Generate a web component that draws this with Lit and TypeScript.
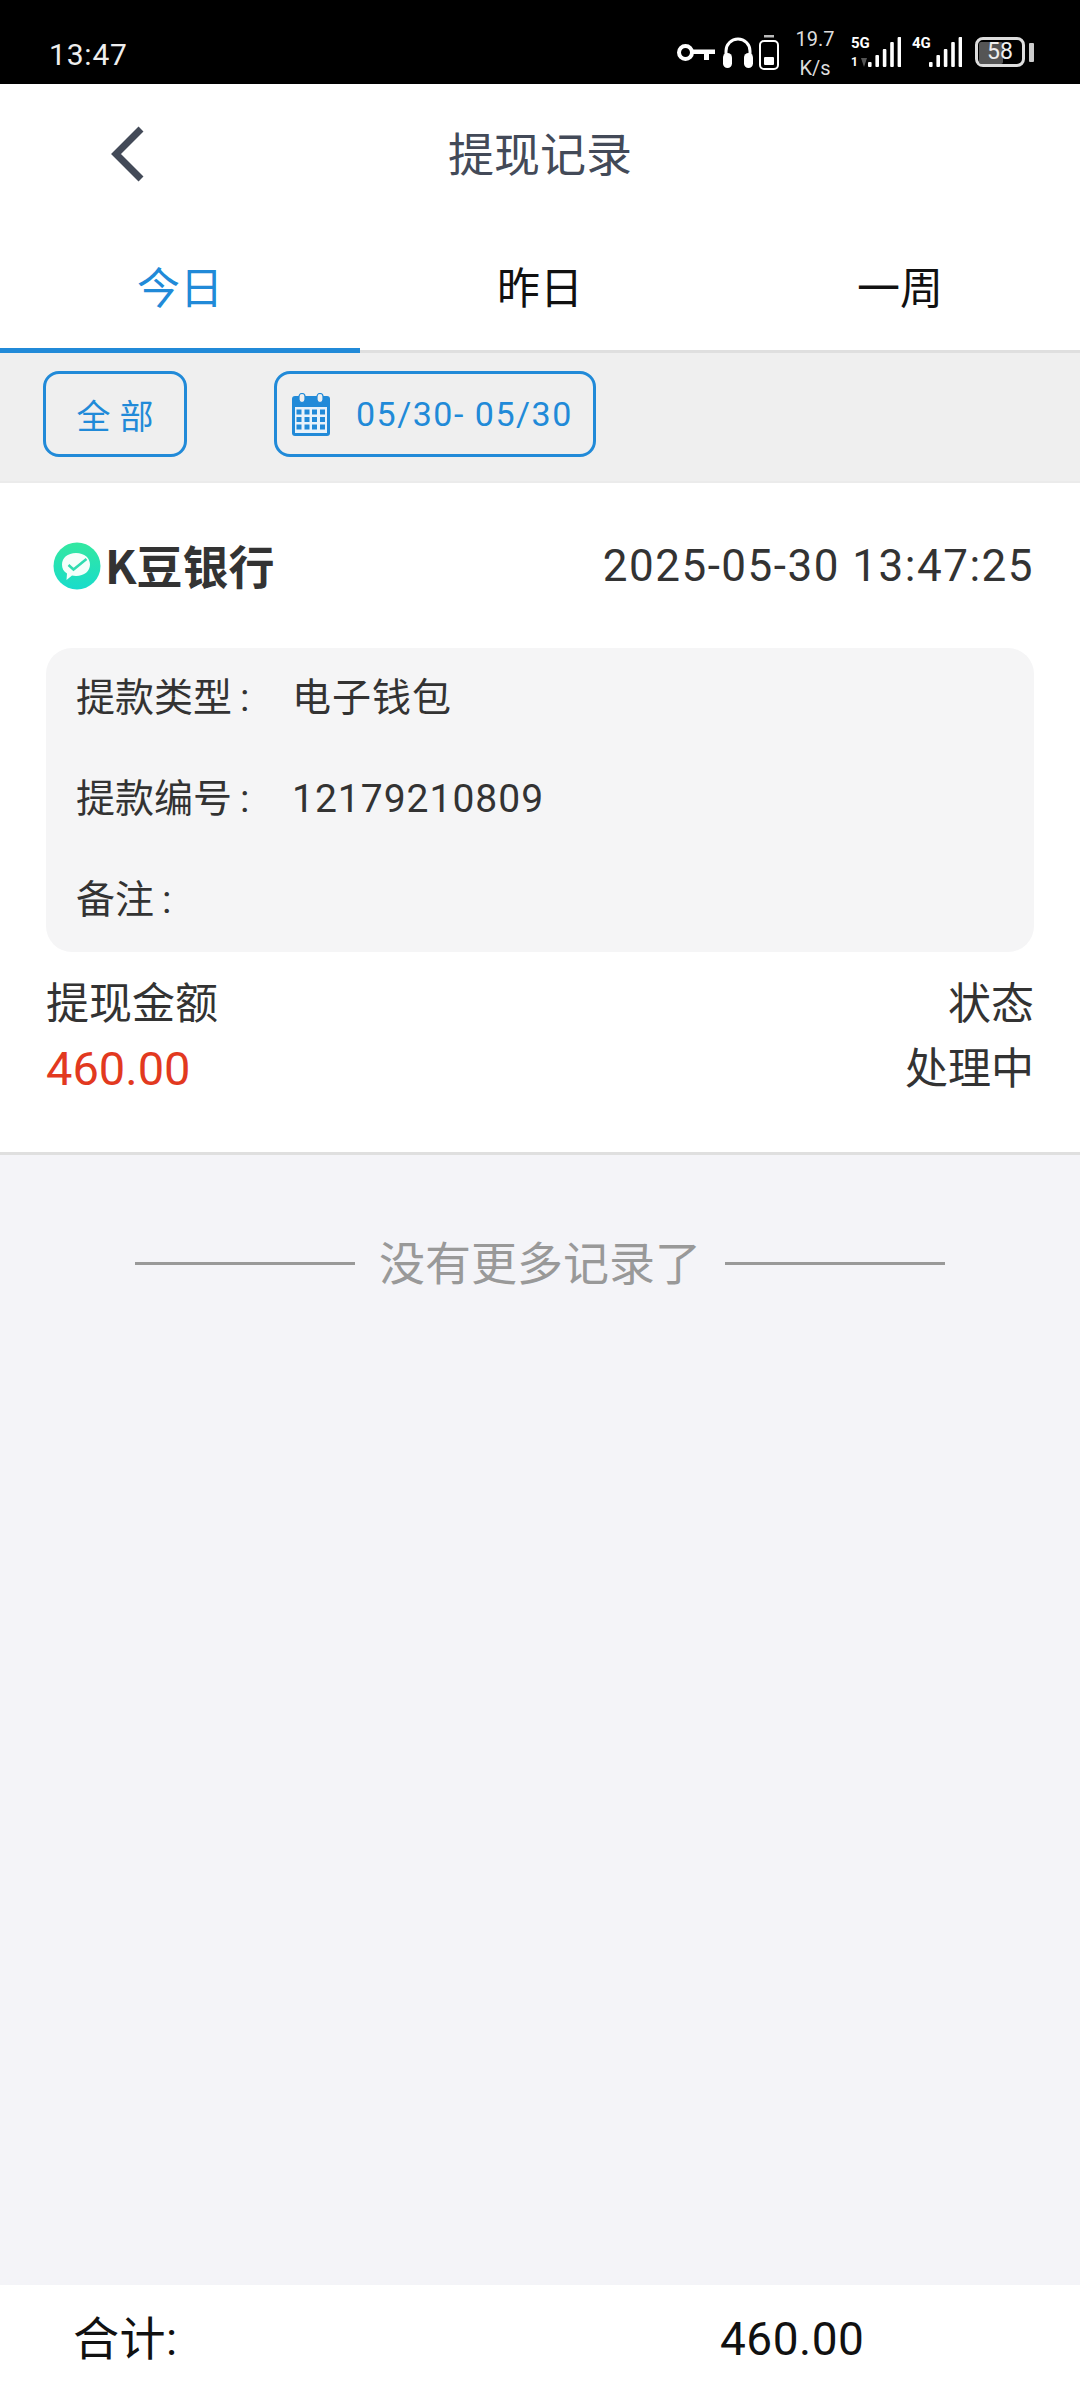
import { css, html, LitElement, svg } from "lit";
import { customElement, state } from "lit/decorators.js";

const TABS = ["今日", "昨日", "一周"];

const DETAILS = [
  { label: "提款类型", value: "电子钱包" },
  { label: "提款编号", value: "12179210809" },
  { label: "备注", value: "" },
];

const backIcon = html`<svg class="back" width="40" height="68" viewBox="0 0 40 68">
  <path d="M36 9 L11 34 L36 59" fill="none" stroke="#434a58" stroke-width="7" />
</svg>`;

const calendarIcon = html`<svg width="38" height="43" viewBox="0 0 38 43">
  <path d="M3 3h32a3 3 0 0 1 3 3v34a3 3 0 0 1-3 3H3a3 3 0 0 1-3-3V6a3 3 0 0 1 3-3z" fill="#218ad8" />
  <rect x="3" y="14" width="32" height="26" fill="#e8f2fa" />
  <rect x="7" y="0.5" width="6" height="9" rx="3" fill="#efefef" stroke="#218ad8" stroke-width="1.2" />
  <rect x="25" y="0.5" width="6" height="9" rx="3" fill="#efefef" stroke="#218ad8" stroke-width="1.2" />
  ${[16.5, 24, 31.5].map((y) =>
    [4.5, 12.5, 20, 28].map((x) => svg`<rect x=${x} y=${y} width="5" height="5" fill="#218ad8" />`)
  )}
</svg>`;

const bankIcon = html`<svg width="48" height="48" viewBox="0 0 48 48">
  <defs>
    <linearGradient id="bank" x1="0" y1="0" x2="0" y2="1">
      <stop offset="0" stop-color="#33e8a0" />
      <stop offset="1" stop-color="#19dccb" />
    </linearGradient>
  </defs>
  <circle cx="24" cy="24" r="23.5" fill="url(#bank)" />
  <path
    d="M23 11c8.5 0 14 5 14 11.5S31.500 34 23 34c-1.500 0-2.800-.2-4-.5L13.500 38l.5-6.500C10.500 29.500 9 26.500 9 22.500 9 16 14.500 11 23 11z"
    fill="#f4fffb"
  />
  <path d="M15.500 23l5 4.500L33.500 17" fill="none" stroke="#2fdcb0" stroke-width="2.500" />
</svg>`;

const keyIcon = html`<svg width="38" height="17" viewBox="0 0 38 17">
  <circle cx="8.500" cy="8.500" r="6.500" fill="none" stroke="#fff" stroke-width="4" />
  <path d="M14 5.500h24v4.500h-6v6h-5v-6H14z" fill="#fff" />
</svg>`;

const headsetIcon = html`<svg width="30" height="32" viewBox="0 0 30 32">
  <path d="M3 20V15a12 12 0 0 1 24 0v5" fill="none" stroke="#fff" stroke-width="3" />
  <rect x="0" y="17" width="9" height="15" rx="4.500" fill="#fff" />
  <rect x="21" y="17" width="9" height="15" rx="4.500" fill="#fff" />
</svg>`;

const phoneBatteryIcon = html`<svg width="20" height="35" viewBox="0 0 20 35">
  <rect x="5" y="0" width="10" height="2.500" fill="#bbb" />
  <rect x="1" y="6" width="18" height="28" rx="4" fill="none" stroke="#fff" stroke-width="2" />
  <rect x="5" y="22" width="10" height="8" rx="1" fill="#fff" />
</svg>`;

const signalBars = html`<svg width="33" height="30" viewBox="0 0 33 30">
  ${[5, 12, 18, 25, 30].map(
    (h, i) => svg`<rect x=${i * 7.4} y=${30 - h} width="3.600" height=${h} rx="1" fill="#fff" />`
  )}
</svg>`;

@customElement("app-root")
export class AppRoot extends LitElement {
  static styles = css`
    :host {
      display: block;
      width: 1080px;
      height: 2400px;
      font-family: Roboto, "Noto Sans CJK SC", sans-serif;
      background: #f4f4f8;
      color: #333;
    }
    .page {
      display: flex;
      flex-direction: column;
      height: 2400px;
    }
    .status {
      height: 84px;
      background: #000;
      color: #fff;
      display: flex;
      align-items: center;
      justify-content: space-between;
      padding: 20px 46px 0 49px;
      flex: none;
      box-sizing: border-box;
    }
    .time {
      font-size: 30px;
      letter-spacing: 0.8px;
      color: #eee;
      margin-top: 4px;
    }
    .status-right {
      display: flex;
      align-items: center;
    }
    .status-right svg {
      display: block;
    }
    .headset {
      margin-left: 8px;
    }
    .phone {
      margin-left: 6px;
    }
    .speed {
      width: 50px;
      margin: 4px 1px 0 11px;
      font-size: 20px;
      line-height: 29px;
      text-align: center;
      color: #ddd;
    }
    .net {
      display: flex;
      align-items: flex-end;
      gap: 1px;
      height: 30px;
      margin-left: 10px;
    }
    .net + .net {
      margin-left: 11px;
    }
    .net-side {
      width: 16px;
      height: 30px;
      display: flex;
      flex-direction: column;
      justify-content: space-between;
      font-size: 15px;
      font-weight: 700;
      line-height: 13px;
    }
    .net-one {
      display: flex;
      align-items: center;
      gap: 3px;
      font-size: 12px;
      line-height: 10px;
    }
    .net-down {
      width: 0;
      height: 0;
      border-top: 9px solid #555;
      border-left: 3px solid transparent;
      border-right: 3px solid transparent;
    }
    .battery {
      position: relative;
      box-sizing: border-box;
      width: 50px;
      height: 30px;
      margin-left: 13px;
      border: 3px solid #ddd;
      border-radius: 8px;
      font-size: 23px;
      line-height: 24px;
      text-align: center;
      color: #eee;
    }
    .battery-fill {
      position: absolute;
      left: 1px;
      top: 2px;
      bottom: 0;
      width: 24px;
      border-radius: 2px;
      background: #555;
    }
    .battery-num {
      position: relative;
    }
    .battery-cap {
      width: 5px;
      height: 19px;
      margin-left: 4px;
      border-radius: 1px;
      background: #ccc;
    }
    .header {
      height: 146px;
      background: #fff;
      display: flex;
      align-items: center;
      justify-content: center;
      position: relative;
      flex: none;
      font-size: 46px;
      color: #434a58;
      box-sizing: border-box;
      padding-bottom: 12px;
    }
    .back {
      position: absolute;
      left: 105px;
      top: 36px;
    }
    .tabs {
      display: grid;
      grid-template-columns: repeat(3, 1fr);
      grid-template-rows: 120px;
      height: 123px;
      background: #fff;
      flex: none;
      box-sizing: border-box;
      border-bottom: 3px solid #dfdfdf;
    }
    .tab {
      display: flex;
      align-items: center;
      justify-content: center;
      box-sizing: border-box;
      height: 123px;
      padding-bottom: 9px;
      border-bottom: 5px solid transparent;
      font-size: 43px;
      color: #111;
    }
    .tab.active {
      color: #218ad8;
      border-bottom-color: #218ad8;
    }
    .filters {
      height: 130px;
      box-sizing: border-box;
      background: #efefef;
      flex: none;
      display: flex;
      align-items: center;
      padding: 0 0 6px 43px;
      border-bottom: 2px solid #ebebeb;
    }
    .chip {
      height: 86px;
      box-sizing: border-box;
      border: 3px solid #218ad8;
      border-radius: 16px;
      color: #218ad8;
      display: flex;
      align-items: center;
    }
    .chip.all {
      width: 144px;
      justify-content: center;
      padding-left: 9px;
      font-size: 34px;
      letter-spacing: 9px;
    }
    .chip.date {
      width: 322px;
      margin-left: 87px;
      padding-left: 15px;
      gap: 26px;
      font-size: 34px;
      letter-spacing: 1.5px;
    }
    .card {
      height: 672px;
      box-sizing: border-box;
      background: #fff;
      flex: none;
      border-bottom: 3px solid #dfdfdf;
      padding: 0 46px;
    }
    .card-top {
      height: 165px;
      display: flex;
      align-items: center;
      justify-content: space-between;
    }
    .bank {
      display: flex;
      align-items: center;
      gap: 4px;
      padding-left: 7px;
      font-family: "Noto Sans CJK SC", sans-serif;
      font-size: 46px;
      line-height: 60px;
      font-weight: 700;
      color: #333;
    }
    .bank span {
      margin-top: -4px;
    }
    .stamp {
      font-size: 44px;
      color: #333;
      letter-spacing: 1.5px;
    }
    .details {
      height: 304px;
      box-sizing: border-box;
      background: #f5f5f6;
      border-radius: 26px;
      padding: 0 30px 2px;
      display: flex;
      flex-direction: column;
      justify-content: space-around;
      font-size: 39px;
      line-height: 50px;
    }
    .detail {
      display: flex;
      align-items: baseline;
    }
    .detail-label {
      width: 216px;
    }
    .detail-value {
      letter-spacing: 1px;
    }
    .colon {
      margin-left: 8px;
    }
    .summary {
      display: flex;
      justify-content: space-between;
      margin-top: 30px;
      font-size: 43px;
      line-height: 44px;
    }
    .summary-col {
      display: flex;
      flex-direction: column;
      gap: 21px;
    }
    .summary-col.right {
      text-align: right;
    }
    .amount {
      color: #e2391f;
      font-size: 47px;
    }
    .more {
      height: 110px;
      margin-top: 50px;
      flex: none;
      display: flex;
      align-items: center;
      justify-content: center;
      gap: 24px;
      font-size: 46px;
      color: #999;
    }
    .more-line {
      width: 220px;
      height: 3px;
      margin-top: 6px;
      background: #999;
    }
    .spacer {
      flex: 1;
    }
    .total {
      height: 115px;
      flex: none;
      background: #fff;
      display: flex;
      align-items: baseline;
      box-sizing: border-box;
      padding: 26px 0 0 73px;
      font-size: 46px;
      line-height: 56px;
      letter-spacing: 0.5px;
      color: #111;
    }
    .total-label {
      width: 647px;
    }
    .total-label .colon {
      margin-left: 0;
    }
  `;

  @state()
  private activeTab = 0;

  render() {
    return html`<div class="page">
      <div class="status">
        <span class="time">13:47</span>
        <div class="status-right">
          ${keyIcon}
          <span class="headset">${headsetIcon}</span>
          <span class="phone">${phoneBatteryIcon}</span>
          <div class="speed">19.7<br />K/s</div>
          <div class="net">
            <div class="net-side">
              <span>5G</span>
              <span class="net-one">1<span class="net-down"></span></span>
            </div>
            ${signalBars}
          </div>
          <div class="net">
            <div class="net-side"><span>4G</span></div>
            ${signalBars}
          </div>
          <div class="battery">
            <div class="battery-fill"></div>
            <span class="battery-num">58</span>
          </div>
          <div class="battery-cap"></div>
        </div>
      </div>
      <div class="header">${backIcon}提现记录</div>
      <div class="tabs">
        ${TABS.map(
          (tab, index) =>
            html`<div class="tab ${index === this.activeTab ? "active" : ""}" @click=${() => (this.activeTab = index)}>
              ${tab}
            </div>`
        )}
      </div>
      <div class="filters">
        <div class="chip all">全部</div>
        <div class="chip date">${calendarIcon}<span>05/30- 05/30</span></div>
      </div>
      <div class="card">
        <div class="card-top">
          <div class="bank">${bankIcon}<span>K豆银行</span></div>
          <div class="stamp">2025-05-30 13:47:25</div>
        </div>
        <div class="details">
          ${DETAILS.map(
            (row) =>
              html`<div class="detail">
                <span class="detail-label">${row.label}<span class="colon">:</span></span>
                <span class="detail-value">${row.value}</span>
              </div>`
          )}
        </div>
        <div class="summary">
          <div class="summary-col">
            <span>提现金额</span>
            <span class="amount">460.00</span>
          </div>
          <div class="summary-col right">
            <span>状态</span>
            <span>处理中</span>
          </div>
        </div>
      </div>
      <div class="more">
        <div class="more-line"></div>
        <span>没有更多记录了</span>
        <div class="more-line"></div>
      </div>
      <div class="spacer"></div>
      <div class="total">
        <span class="total-label">合计<span class="colon">:</span></span>
        <span>460.00</span>
      </div>
    </div>`;
  }
}
